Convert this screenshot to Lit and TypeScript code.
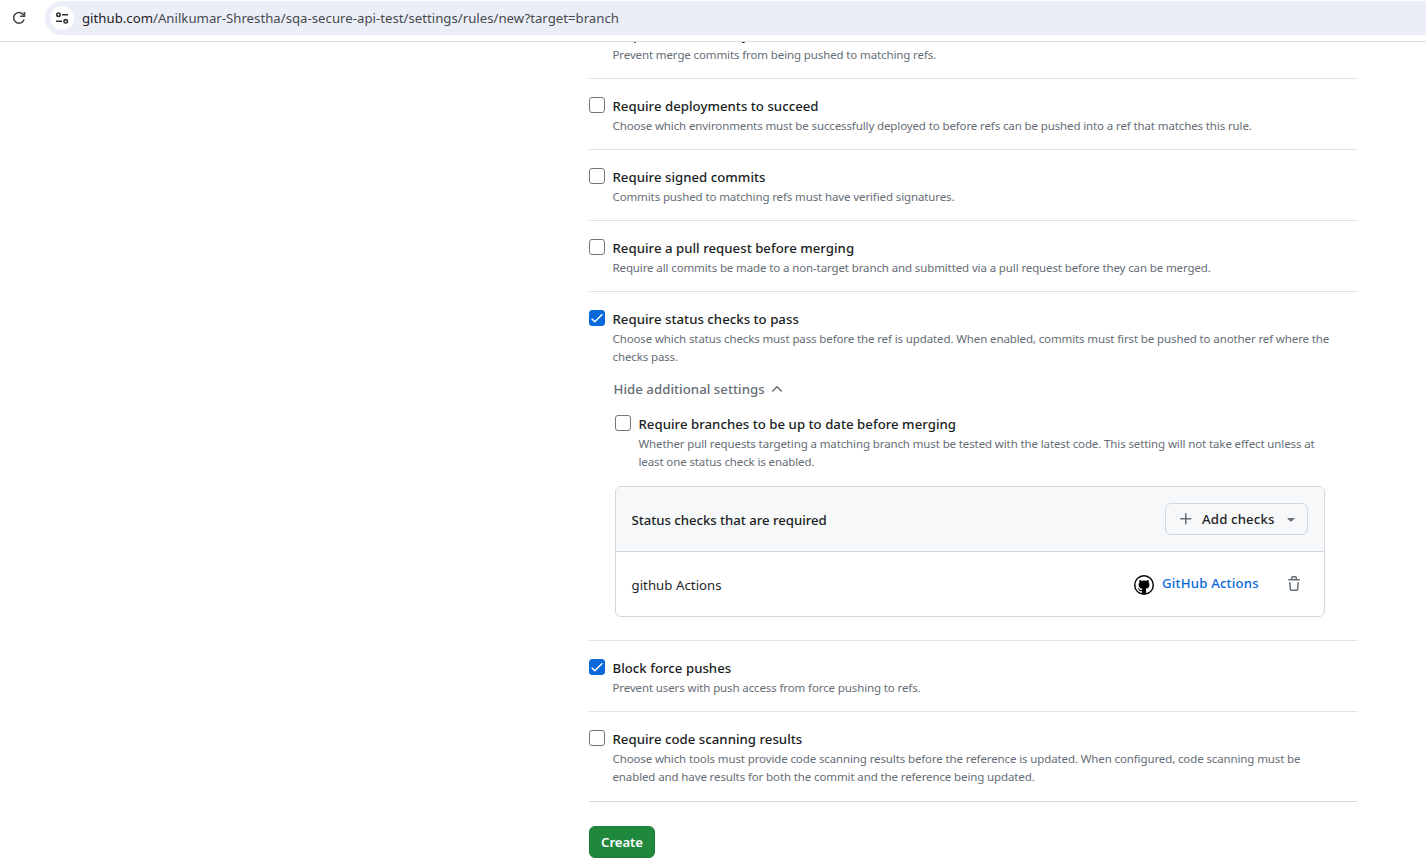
import { LitElement, html, css, nothing } from "lit";
import { customElement, property } from "lit/decorators.js";

const FONT = css`"Noto Sans", "Liberation Sans", sans-serif`;

/** Chrome-like address bar. */
@customElement("address-bar")
class AddressBar extends LitElement {
  static styles = css`
    :host {
      display: flex;
      box-sizing: border-box;
      height: 42px;
      padding-top: 1px;
      border-bottom: 1px solid #dfdfdf;
      background: #fff;
      font-family: ${FONT};
    }
    .reload {
      width: 45px;
      height: 34px;
      display: flex;
      align-items: center;
      padding-left: 11px;
      box-sizing: border-box;
      flex: none;
    }
    .pill {
      flex: 1;
      height: 34px;
      display: flex;
      align-items: center;
      gap: 8px;
      padding-left: 5px;
      border-radius: 17px 0 0 17px;
      background: #ebeef7;
    }
    .site {
      width: 24px;
      height: 24px;
      border-radius: 50%;
      background: #fff;
      display: block;
    }
    .url {
      font-size: 13.2px;
      line-height: 20px;
      letter-spacing: 0.012px;
      color: #474a4d;
      white-space: nowrap;
    }
    .host {
      color: #1f2023;
    }
  `;
  render() {
    return html`
      <div class="reload">
        <svg width="16" height="16" viewBox="0 0 16 16" fill="none" stroke="#474747" stroke-width="1.6">
          <path d="M13.1 9.6A5.4 5.4 0 1 1 12 4.2L13.4 5.6" />
          <path d="M13.5 1.9V6.3H9" />
        </svg>
      </div>
      <div class="pill">
        <svg class="site" viewBox="0 0 24 24" fill="none" stroke="#333" stroke-width="1.6">
          <circle cx="8.5" cy="8.7" r="1.7" />
          <path d="M12 8.7H18M6 15.3H12" />
          <circle cx="15.7" cy="15.3" r="1.7" />
        </svg>
        <span class="url"><span class="host">github.com</span>/Anilkumar-Shrestha/sqa-secure-api-test/settings/rules/new?target=branch</span>
      </div>
    `;
  }
}

/** Checkbox with a title and a description; extra content goes in the slot. */
@customElement("rule-option")
class RuleOption extends LitElement {
  static styles = css`
    :host {
      display: grid;
      grid-template-columns: 16px 1fr;
      column-gap: 8px;
      font-family: ${FONT};
    }
    .box {
      box-sizing: border-box;
      width: 16px;
      height: 16px;
      margin-top: 2px;
      border: 1px solid #6e7781;
      border-radius: 3px;
      background: #fff;
    }
    .on {
      border-color: #0969da;
      background: #0969da;
    }
    .on svg {
      display: block;
    }
    .title {
      margin-left: -0.5px;
      padding-top: 1px;
      font-size: 13.2px;
      font-weight: 500;
      line-height: 21px;
      letter-spacing: 0.03px;
      color: #1a1e23;
    }
    .desc {
      margin-left: -0.5px;
      font-size: 11.5px;
      line-height: 18px;
      letter-spacing: -0.118px;
      color: #656d76;
    }
    .line {
      display: block;
      white-space: nowrap;
    }
  `;
  @property() label = "";
  @property({ type: Boolean }) checked = false;
  @property({ attribute: false }) lines: string[] = [];
  render() {
    return html`
      <span class="box ${this.checked ? "on" : ""}">
        ${this.checked
          ? html`<svg width="14" height="14" viewBox="0 0 14 14" fill="none" stroke="#fff" stroke-width="1.5">
              <path d="M1.7 7.8L4.8 10.8L12.4 3.2" />
            </svg>`
          : nothing}
      </span>
      <div>
        <div class="title">${this.label}</div>
        <div class="desc">${this.lines.map((l) => html`<span class="line">${l}</span>`)}</div>
        <slot></slot>
      </div>
    `;
  }
}

/** Table of required status checks. */
@customElement("status-checks")
class StatusChecks extends LitElement {
  static styles = css`
    :host {
      display: block;
      box-sizing: border-box;
      width: 710px;
      border: 1px solid #d0d7de;
      border-radius: 6px;
      overflow: hidden;
      font-family: ${FONT};
      font-size: 13.2px;
      line-height: 20px;
      color: #1f2328;
    }
    .row {
      box-sizing: border-box;
      height: 64px;
      display: flex;
      align-items: center;
      padding: 0 16px;
    }
    .head {
      height: 65px;
      background: #f6f8fa;
      border-bottom: 1px solid #d0d7de;
    }
    .name {
      flex: 1;
      padding-top: 2px;
      margin-left: -0.5px;
      letter-spacing: 0.05px;
    }
    .strong {
      font-weight: 500;
      letter-spacing: -0.03px;
      color: #1a1e23;
    }
    .add {
      box-sizing: border-box;
      width: 143px;
      height: 32px;
      display: flex;
      align-items: center;
      padding: 0 12px;
      border: 1px solid #d0d7de;
      border-radius: 6px;
      background: #f6f8fa;
      font-weight: 500;
      letter-spacing: 0.16px;
    }
    .add .text {
      flex: 1;
      padding-left: 8px;
      white-space: nowrap;
    }
    .mark {
      margin: 2px 8px 0 0;
    }
    .link {
      width: 97px;
      padding-bottom: 2px;
      font-weight: 500;
      letter-spacing: 0.17px;
      color: #0969da;
      white-space: nowrap;
    }
    .trash {
      margin: 0 6px 1px 27px;
    }
    svg {
      flex: none;
      display: block;
    }
  `;
  render() {
    return html`
      <div class="row head">
        <span class="name strong">Status checks that are required</span>
        <div class="add">
          <svg width="16" height="16" viewBox="0 0 16 16" fill="#656d76">
            <path d="M7.75 2a.75.75 0 0 1 .75.75V7h4.25a.75.75 0 0 1 0 1.5H8.5v4.25a.75.75 0 0 1-1.5 0V8.5H2.75a.75.75 0 0 1 0-1.5H7V2.75A.75.75 0 0 1 7.75 2Z" />
          </svg>
          <span class="text">Add checks</span>
          <svg width="8" height="16" viewBox="4 0 8 16" fill="#656d76">
            <path d="m4.427 7.427 3.396 3.396a.25.25 0 0 0 .354 0l3.396-3.396A.25.25 0 0 0 11.396 7H4.604a.25.25 0 0 0-.177.427Z" />
          </svg>
        </div>
      </div>
      <div class="row">
        <span class="name">github Actions</span>
        <svg class="mark" width="20" height="20" viewBox="0 0 20 20">
          <circle cx="10" cy="10" r="10" fill="#000" />
          <path
            transform="translate(1.5 1.5) scale(1.0625)"
            fill="#fff"
            d="M8 0c4.42 0 8 3.58 8 8a8.013 8.013 0 0 1-5.45 7.59c-.4.08-.55-.17-.55-.38 0-.27.01-1.13.01-2.2 0-.75-.25-1.23-.54-1.48 1.78-.2 3.65-.88 3.65-3.95 0-.88-.31-1.59-.82-2.15.08-.2.36-1.02-.08-2.12 0 0-.67-.22-2.2.82-.64-.18-1.32-.27-2-.27-.68 0-1.36.09-2 .27-1.53-1.03-2.2-.82-2.2-.82-.44 1.1-.16 1.92-.08 2.12-.51.56-.82 1.28-.82 2.15 0 3.06 1.86 3.75 3.64 3.95-.23.2-.44.55-.51 1.07-.46.21-1.61.55-2.33-.66-.15-.24-.6-.83-1.23-.82-.67.01-.27.38.01.53.34.19.73.9.82 1.13.16.45.68 1.31 2.69.94 0 .67.01 1.3.01 1.49 0 .21-.15.45-.55.38A7.995 7.995 0 0 1 0 8c0-4.42 3.58-8 8-8Z"
          />
        </svg>
        <span class="link">GitHub Actions</span>
        <svg class="trash" width="16" height="16" viewBox="0 0 16 16" fill="#656d76">
          <path d="M11 1.75V3h2.25a.75.75 0 0 1 0 1.5H2.75a.75.75 0 0 1 0-1.5H5V1.75C5 .784 5.784 0 6.75 0h2.5C10.216 0 11 .784 11 1.75ZM4.496 6.675l.66 6.6a.25.25 0 0 0 .249.225h5.19a.25.25 0 0 0 .249-.225l.66-6.6a.75.75 0 0 1 1.492.149l-.66 6.6A1.748 1.748 0 0 1 10.595 15h-5.19a1.75 1.75 0 0 1-1.741-1.575l-.66-6.6a.75.75 0 1 1 1.492-.15ZM6.5 1.75V3h3V1.75a.25.25 0 0 0-.25-.25h-2.5a.25.25 0 0 0-.25.25Z" />
        </svg>
      </div>
    `;
  }
}

interface Rule {
  label: string;
  lines: string[];
  checked?: boolean;
  settings?: boolean;
}

const RULES: Rule[] = [
  { label: "Require linear history", lines: ["Prevent merge commits from being pushed to matching refs."] },
  {
    label: "Require deployments to succeed",
    lines: ["Choose which environments must be successfully deployed to before refs can be pushed into a ref that matches this rule."],
  },
  { label: "Require signed commits", lines: ["Commits pushed to matching refs must have verified signatures."] },
  {
    label: "Require a pull request before merging",
    lines: ["Require all commits be made to a non-target branch and submitted via a pull request before they can be merged."],
  },
  {
    label: "Require status checks to pass",
    checked: true,
    settings: true,
    lines: [
      "Choose which status checks must pass before the ref is updated. When enabled, commits must first be pushed to another ref where the",
      "checks pass.",
    ],
  },
  { label: "Block force pushes", checked: true, lines: ["Prevent users with push access from force pushing to refs."] },
  {
    label: "Require code scanning results",
    lines: [
      "Choose which tools must provide code scanning results before the reference is updated. When configured, code scanning must be",
      "enabled and have results for both the commit and the reference being updated.",
    ],
  },
];

const BRANCH_LINES = [
  "Whether pull requests targeting a matching branch must be tested with the latest code. This setting will not take effect unless at",
  "least one status check is enabled.",
];

@customElement("app-root")
class AppRoot extends LitElement {
  static styles = css`
    :host {
      display: flex;
      flex-direction: column;
      height: 867px;
      overflow: hidden;
      background: #fff;
      font-family: ${FONT};
    }
    address-bar {
      flex: none;
    }
    .viewport {
      flex: 1;
      min-height: 0;
      overflow: hidden;
      padding-left: 589px;
    }
    .rules {
      width: 768px;
      margin-top: -34px;
    }
    .rule {
      padding: 16px 0 14px;
      border-bottom: 1px solid #dfe2e5;
    }
    .rule:last-of-type {
      padding-bottom: 15px;
      border-color: #d0d7de;
    }
    .expanded {
      padding-bottom: 23px;
    }
    .toggle {
      display: flex;
      align-items: center;
      gap: 4px;
      padding: 13px 0 0 1px;
      margin-left: -0.5px;
      font-size: 13.2px;
      font-weight: 500;
      line-height: 20px;
      letter-spacing: 0.05px;
      color: #656d76;
    }
    .nested {
      padding: 14px 0 0 2px;
    }
    status-checks {
      margin: 15px 0 0 2px;
    }
    .create {
      box-sizing: border-box;
      width: 66px;
      height: 32px;
      margin-top: 24px;
      display: flex;
      align-items: center;
      justify-content: center;
      border: 1px solid #1c7e38;
      border-radius: 6px;
      background: #1f883d;
      color: #fff;
      font-size: 13.2px;
      font-weight: 600;
      letter-spacing: -0.1px;
    }
  `;
  private settings() {
    return html`
      <div class="toggle">
        <span>Hide additional settings</span>
        <svg width="16" height="16" viewBox="0 0 16 16" fill="#656d76">
          <path d="M3.22 10.53a.749.749 0 0 1 0-1.06l4.25-4.25a.749.749 0 0 1 1.06 0l4.25 4.25a.749.749 0 1 1-1.06 1.06L8 6.811 4.28 10.53a.749.749 0 0 1-1.06 0Z" />
        </svg>
      </div>
      <div class="nested">
        <rule-option label="Require branches to be up to date before merging" .lines=${BRANCH_LINES}></rule-option>
      </div>
      <status-checks></status-checks>
    `;
  }
  render() {
    return html`
      <address-bar></address-bar>
      <div class="viewport">
        <div class="rules">
          ${RULES.map(
            (r) => html`<section class="rule ${r.settings ? "expanded" : ""}">
              <rule-option .label=${r.label} .lines=${r.lines} ?checked=${r.checked ?? false}>
                ${r.settings ? this.settings() : nothing}
              </rule-option>
            </section>`
          )}
        </div>
        <div class="create">Create</div>
      </div>
    `;
  }
}
